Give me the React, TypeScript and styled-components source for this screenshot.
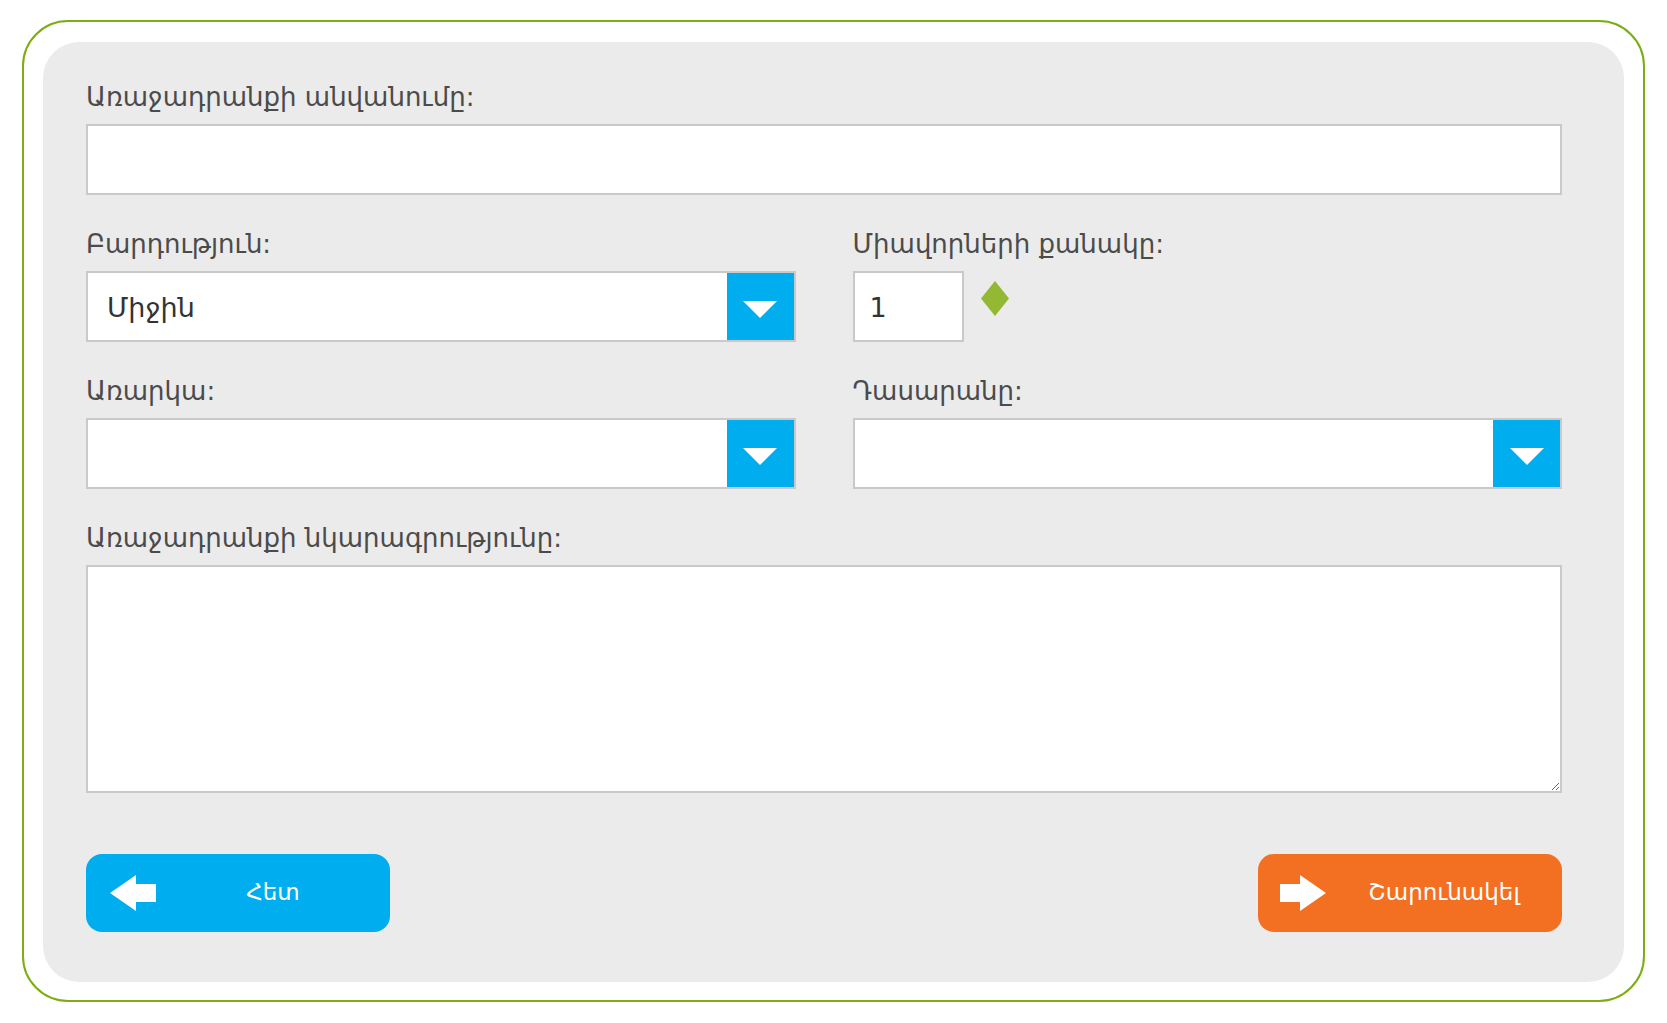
import React from "react";
import styled, { createGlobalStyle } from "styled-components";

const GlobalStyle = createGlobalStyle`
  html, body { margin: 0; padding: 0; background: #ffffff; }
  body { font-family: "DejaVu Sans", "Noto Sans", sans-serif; }
  * { box-sizing: border-box; }
`;

const Frame = styled.div`
  margin: 20px 0 0 22px;
  width: 1623px;
  height: 982px;
  border: 2px solid #7dad12;
  border-radius: 46px;
  padding: 20px 19px 18px 19px;
  background: #ffffff;
`;

const Panel = styled.div`
  height: 100%;
  background: #ebebeb;
  border-radius: 36px;
  padding: 42px 62px 0 43px;
  display: flex;
  flex-direction: column;
`;

const Field = styled.div`
  display: flex;
  flex-direction: column;
  margin-bottom: 36px;
`;

const Row = styled.div`
  display: grid;
  grid-template-columns: 1fr 1fr;
  column-gap: 57px;
`;

const Label = styled.label`
  display: block;
  font-size: 26px;
  line-height: 26px;
  height: 30px;
  color: #4b4b4b;
  margin-bottom: 10px;
  white-space: nowrap;
`;

const TextInput = styled.input`
  display: block;
  width: 100%;
  height: 71px;
  border: 2px solid #c9c9c9;
  background: #ffffff;
  outline: none;
  font-family: inherit;
  font-size: 26px;
  color: #333;
  padding: 0 19px;
`;

const SelectBox = styled.div`
  display: flex;
  align-items: stretch;
  height: 71px;
  border: 2px solid #c9c9c9;
  background: #ffffff;
`;

const SelectValue = styled.div`
  flex: 1;
  display: flex;
  align-items: center;
  padding: 2px 19px 0;
  font-size: 27px;
  color: #333;
`;

const SelectButton = styled.div`
  width: 67px;
  background: #00aeef;
  display: flex;
  align-items: center;
  justify-content: center;
  padding-top: 6px;
`;

const NumberRow = styled.div`
  display: flex;
  align-items: flex-start;
`;

const NumberInput = styled.div`
  width: 111px;
  height: 71px;
  border: 2px solid #c9c9c9;
  background: #ffffff;
  display: flex;
  align-items: center;
  padding: 2px 0 0 15px;
  font-size: 27px;
  color: #333;
`;

const Spinner = styled.svg`
  margin: 10px 0 0 17px;
`;

const TextArea = styled.textarea`
  display: block;
  width: 100%;
  height: 228px;
  border: 2px solid #c9c9c9;
  background: #ffffff;
  outline: none;
  resize: vertical;
  font-family: inherit;
  font-size: 20px;
  padding: 10px 19px;
`;

const Actions = styled.div`
  display: flex;
  justify-content: space-between;
  margin-top: 25px;
`;

const ActionButton = styled.button<{ $tone: "blue" | "orange" }>`
  width: 304px;
  height: 78px;
  border: none;
  border-radius: 16px;
  background: ${(p) => (p.$tone === "blue" ? "#00aeef" : "#f37022")};
  color: #ffffff;
  display: flex;
  align-items: center;
  padding: 0 0 0 ${(p) => (p.$tone === "blue" ? "24px" : "22px")};
  font-family: "DejaVu Sans", sans-serif;
  font-size: 23px;
  cursor: pointer;
`;

const ButtonText = styled.span`
  flex: 1;
  text-align: center;
  margin-top: -2px;
`;

const Caret = () => (
  <svg width="34" height="17" viewBox="0 0 34 17">
    <polygon points="0,0 34,0 17,17" fill="#ffffff" />
  </svg>
);

const Dropdown = ({ value }: { value?: string }) => (
  <SelectBox>
    <SelectValue>{value}</SelectValue>
    <SelectButton>
      <Caret />
    </SelectButton>
  </SelectBox>
);

const ArrowLeft = () => (
  <svg width="46" height="36" viewBox="0 0 46 36">
    <polygon points="0,18 26,0 26,9 46,9 46,27 26,27 26,36" fill="#ffffff" />
  </svg>
);

const ArrowRight = () => (
  <svg width="46" height="36" viewBox="0 0 46 36">
    <polygon points="46,18 20,0 20,9 0,9 0,27 20,27 20,36" fill="#ffffff" />
  </svg>
);

export default function App() {
  return (
    <>
      <GlobalStyle />
      <Frame>
        <Panel>
          <Field>
            <Label>Առաջադրանքի անվանումը:</Label>
            <TextInput type="text" />
          </Field>
          <Row>
            <Field>
              <Label>Բարդություն:</Label>
              <Dropdown value="Միջին" />
            </Field>
            <Field>
              <Label>Միավորների քանակը:</Label>
              <NumberRow>
                <NumberInput>1</NumberInput>
                <Spinner width="28" height="35" viewBox="0 0 28 35">
                  <polygon points="14,0 28,17.5 14,35 0,17.5" fill="#93b833" />
                </Spinner>
              </NumberRow>
            </Field>
          </Row>
          <Row>
            <Field>
              <Label>Առարկա:</Label>
              <Dropdown />
            </Field>
            <Field>
              <Label>Դասարանը:</Label>
              <Dropdown />
            </Field>
          </Row>
          <Field>
            <Label>Առաջադրանքի նկարագրությունը:</Label>
            <TextArea />
          </Field>
          <Actions>
            <ActionButton $tone="blue">
              <ArrowLeft />
              <ButtonText>Հետ</ButtonText>
            </ActionButton>
            <ActionButton $tone="orange">
              <ArrowRight />
              <ButtonText>Շարունակել</ButtonText>
            </ActionButton>
          </Actions>
        </Panel>
      </Frame>
    </>
  );
}
